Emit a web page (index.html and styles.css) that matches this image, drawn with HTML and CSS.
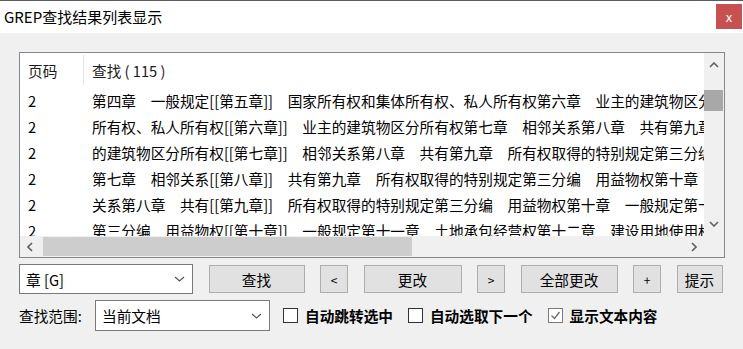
FILE: index.html
```html
<!DOCTYPE html>
<html lang="zh-CN">
<head>
<meta charset="utf-8">
<title>GREP查找结果列表显示</title>
<link rel="stylesheet" href="styles.css">
</head>
<body>
<div class="titlebar">
  <div class="title">GREP查找结果列表显示</div>
  <div class="close">x</div>
</div>
<div class="content">
  <div class="list">
    <div class="viewport">
      <div class="head">
        <div class="c1">页码</div>
        <div class="c2">查找 ( 115 )</div>
      </div>
      <div class="row"><div class="c1">2</div><div class="c2">第四章　一般规定[[第五章]]　国家所有权和集体所有权、私人所有权第六章　业主的建筑物区分所有权</div></div>
      <div class="row"><div class="c1">2</div><div class="c2">所有权、私人所有权[[第六章]]　业主的建筑物区分所有权第七章　相邻关系第八章　共有第九章　所有权</div></div>
      <div class="row"><div class="c1">2</div><div class="c2">的建筑物区分所有权[[第七章]]　相邻关系第八章　共有第九章　所有权取得的特别规定第三分编　用益物权</div></div>
      <div class="row"><div class="c1">2</div><div class="c2">第七章　相邻关系[[第八章]]　共有第九章　所有权取得的特别规定第三分编　用益物权第十章　一般规定</div></div>
      <div class="row"><div class="c1">2</div><div class="c2">关系第八章　共有[[第九章]]　所有权取得的特别规定第三分编　用益物权第十章　一般规定第十一章</div></div>
      <div class="row"><div class="c1">2</div><div class="c2">第三分编　用益物权[[第十章]]　一般规定第十一章　土地承包经营权第十二章　建设用地使用权</div></div>
    </div>
    <div class="vscroll">
      <div class="arrow">
        <svg width="10" height="6" viewBox="0 0 10 6"><polyline points="1,5 5,1 9,5" fill="none" stroke="#606060" stroke-width="1.6"/></svg>
      </div>
      <div class="vtrack"><div class="vthumb"></div></div>
      <div class="arrow">
        <svg width="10" height="6" viewBox="0 0 10 6"><polyline points="1,1 5,5 9,1" fill="none" stroke="#606060" stroke-width="1.6"/></svg>
      </div>
    </div>
    <div class="hscroll">
      <div class="harrow">
        <svg width="6" height="10" viewBox="0 0 6 10"><polyline points="5,1 1,5 5,9" fill="none" stroke="#606060" stroke-width="1.6"/></svg>
      </div>
      <div class="htrack"><div class="hthumb"></div></div>
      <div class="harrow">
        <svg width="6" height="10" viewBox="0 0 6 10"><polyline points="1,1 5,5 1,9" fill="none" stroke="#606060" stroke-width="1.6"/></svg>
      </div>
    </div>
    <div class="corner"></div>
  </div>

  <div class="bar1">
    <div class="combo combo-g">
      <span>章 [G]</span>
      <svg width="11" height="6" viewBox="0 0 11 6"><polyline points="1,1 5.5,5 10,1" fill="none" stroke="#555" stroke-width="1.2"/></svg>
    </div>
    <div class="btn w-find">查找</div>
    <div class="btn w-small sym">&lt;</div>
    <div class="btn w-change">更改</div>
    <div class="btn w-small sym">&gt;</div>
    <div class="btn w-all">全部更改</div>
    <div class="btn w-small sym">+</div>
    <div class="btn w-tip">提示</div>
  </div>

  <div class="bar2">
    <div class="label">查找范围:</div>
    <div class="combo combo-scope">
      <span>当前文档</span>
      <svg width="11" height="6" viewBox="0 0 11 6"><polyline points="1,1 5.5,5 10,1" fill="none" stroke="#555" stroke-width="1.2"/></svg>
    </div>
    <div class="check first"><span class="box"></span><span class="clabel">自动跳转选中</span></div>
    <div class="check"><span class="box"></span><span class="clabel">自动选取下一个</span></div>
    <div class="check"><span class="box checked"><svg width="13" height="13" viewBox="0 0 13 13"><polyline points="2.5,6.5 5.5,9.5 10.5,3" fill="none" stroke="#6a6a6a" stroke-width="1.3"/></svg></span><span class="clabel">显示文本内容</span></div>
  </div>
</div>
</body>
</html>
```
FILE: styles.css
```css
html, body {
  margin: 0;
  padding: 0;
}
body {
  width: 743px;
  height: 349px;
  overflow: hidden;
  background: #f0f0f0;
  font-family: "Noto Sans CJK SC", "Noto Sans", sans-serif;
  font-size: 14.67px;
  color: #000;
}
.titlebar {
  height: 33px;
  box-sizing: border-box;
  background: #fff;
  border-top: 1px solid #5c5c5c;
  display: flex;
  justify-content: space-between;
  align-items: flex-start;
  padding-left: 4px;
  padding-right: 1px;
}
.title {
  font-size: 15px;
  line-height: 31px;
}
.close {
  margin-top: 3px;
  width: 26px;
  height: 25px;
  background: #c75050;
  color: #fff;
  font-size: 13px;
  display: flex;
  align-items: center;
  justify-content: center;
  line-height: 1;
}
.content {
  padding: 19px 18px 0 19px;
}
.list {
  width: 706px;
  height: 206px;
  box-sizing: border-box;
  border: 1px solid #828790;
  background: #fff;
  display: grid;
  grid-template-columns: 1fr 20px;
  grid-template-rows: 1fr 21px;
}
.viewport {
  overflow: hidden;
  background: #fff;
  white-space: nowrap;
}
.head {
  display: flex;
  align-items: center;
  height: 34px;
}
.c1 {
  flex: none;
  width: 63px;
  box-sizing: border-box;
  padding-left: 8px;
}
.head .c2 {
  border-left: 1px solid #e5e5e5;
  padding-left: 8px;
  height: 30px;
  display: flex;
  align-items: center;
  color: #1a1a1a;
  white-space: pre;
}
.head .c1 {
  color: #1a1a1a;
}
.row {
  display: flex;
  align-items: center;
  height: 26px;
}
.row .c2 {
  padding-left: 9px;
}
.vscroll {
  background: #f0f0f0;
  display: flex;
  flex-direction: column;
}
.arrow {
  height: 24px;
  display: flex;
  align-items: center;
  justify-content: center;
  flex: none;
}
.vtrack {
  flex: 1;
  padding-top: 13px;
}
.vthumb {
  height: 21px;
  margin: 0 1px 0 0;
  background: #a8a8a8;
}
.hscroll {
  background: #f0f0f0;
  display: flex;
  align-items: stretch;
}
.harrow {
  width: 20px;
  flex: none;
  display: flex;
  align-items: center;
  justify-content: center;
}
.htrack {
  flex: 1;
  padding: 1px 0 1px 3px;
  display: flex;
}
.hthumb {
  width: 369px;
  background: #cdcdcd;
}
.corner {
  background: #f0f0f0;
}
.bar1 {
  margin-top: 6px;
  height: 30px;
  display: flex;
  align-items: center;
  gap: 15.5px;
}
.combo {
  box-sizing: border-box;
  background: #fff;
  border: 1px solid #7a7a7a;
  display: flex;
  align-items: center;
  justify-content: space-between;
  padding: 0 7px 0 6px;
  flex: none;
}
.combo-g {
  width: 174px;
  height: 30px;
}
.btn {
  box-sizing: border-box;
  height: 28px;
  background: #e1e1e1;
  border: 1px solid #adadad;
  display: flex;
  align-items: center;
  justify-content: center;
  flex: none;
}
.sym {
  font-size: 12px;
}
.w-find { width: 96px; }
.w-small { width: 28px; }
.w-change { width: 98px; }
.w-all { width: 97px; }
.w-tip { width: 46px; }
.bar2 {
  margin-top: 6px;
  height: 31px;
  display: flex;
  align-items: center;
}
.label {
  width: 76px;
  flex: none;
}
.combo-scope {
  width: 175px;
  height: 31px;
}
.check {
  display: flex;
  align-items: center;
  gap: 7px;
  margin-left: 15px;
}
.check.first {
  margin-left: 13px;
}
.box {
  box-sizing: border-box;
  width: 15px;
  height: 15px;
  border: 1px solid #333;
  background: #fff;
  display: flex;
  align-items: center;
  justify-content: center;
}
.box.checked {
  border-color: #7a7a7a;
}
.clabel {
  font-weight: bold;
}
```
